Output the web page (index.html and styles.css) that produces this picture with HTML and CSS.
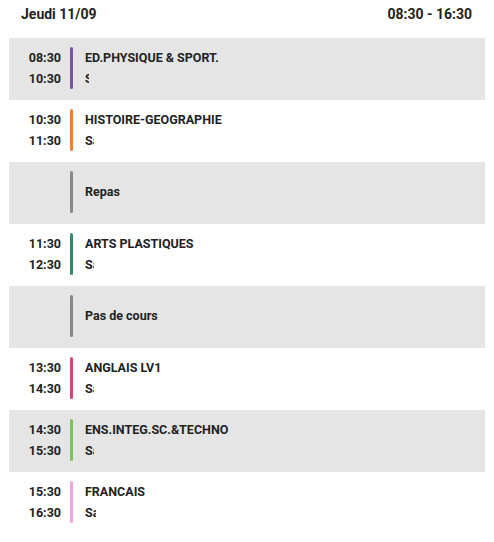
FILE: index.html
```html
<!DOCTYPE html>
<html lang="fr">
<head>
<meta charset="utf-8">
<link rel="stylesheet" href="styles.css">
</head>
<body>
<div class="day">
  <div class="day-head">
    <span>Jeudi 11/09</span>
    <span>08:30 - 16:30</span>
  </div>
  <div class="row alt">
    <div class="times"><span>08:30</span><span>10:30</span></div>
    <div class="bar c-purple"></div>
    <div class="info"><span class="subj">ED.PHYSIQUE &amp; SPORT.</span><span class="room w4">Salle</span></div>
  </div>
  <div class="row">
    <div class="times"><span>10:30</span><span>11:30</span></div>
    <div class="bar c-orange"></div>
    <div class="info"><span class="subj">HISTOIRE-GEOGRAPHIE</span><span class="room w9">Salle</span></div>
  </div>
  <div class="row alt">
    <div class="times"></div>
    <div class="bar c-gray"></div>
    <div class="info single"><span class="subj">Repas</span></div>
  </div>
  <div class="row">
    <div class="times"><span>11:30</span><span>12:30</span></div>
    <div class="bar c-teal"></div>
    <div class="info"><span class="subj">ARTS PLASTIQUES</span><span class="room w9">Salle</span></div>
  </div>
  <div class="row alt">
    <div class="times"></div>
    <div class="bar c-gray"></div>
    <div class="info single"><span class="subj">Pas de cours</span></div>
  </div>
  <div class="row">
    <div class="times"><span>13:30</span><span>14:30</span></div>
    <div class="bar c-crimson"></div>
    <div class="info"><span class="subj">ANGLAIS LV1</span><span class="room w9">Salle</span></div>
  </div>
  <div class="row alt">
    <div class="times"><span>14:30</span><span>15:30</span></div>
    <div class="bar c-green"></div>
    <div class="info"><span class="subj">ENS.INTEG.SC.&amp;TECHNO</span><span class="room w9">Salle</span></div>
  </div>
  <div class="row">
    <div class="times"><span>15:30</span><span>16:30</span></div>
    <div class="bar c-pink"></div>
    <div class="info"><span class="subj">FRANCAIS</span><span class="room w11">Salle</span></div>
  </div>
</div>
</body>
</html>
```
FILE: styles.css
```css
html, body {
  margin: 0;
  padding: 0;
  background: #ffffff;
}
body {
  font-family: Roboto, "Liberation Sans", sans-serif;
  color: #222222;
  font-weight: 700;
}
.day {
  padding: 0 9px;
}
.day-head {
  height: 38px;
  display: flex;
  justify-content: space-between;
  align-items: flex-start;
  padding: 5px 13px 0 12px;
  box-sizing: border-box;
  font-size: 14px;
  line-height: 18px;
}
.row {
  height: 62px;
  display: flex;
  align-items: flex-start;
  padding-top: 9px;
  box-sizing: border-box;
  font-size: 12.5px;
}
.row.alt {
  background: #e5e5e5;
}
.times {
  width: 52px;
  display: flex;
  flex-direction: column;
  align-items: flex-end;
  line-height: 21px;
}
.bar {
  width: 3px;
  height: 42px;
  border-radius: 2px;
  margin-left: 9px;
}
.c-purple { background: #7b52ab; }
.c-orange { background: #f47c30; }
.c-gray { background: #888888; }
.c-teal { background: #2e8c6a; }
.c-crimson { background: #d6456f; }
.c-green { background: #7cc35a; }
.c-pink { background: #f3a3e3; }
.info {
  margin-left: 12px;
  display: flex;
  flex-direction: column;
  line-height: 21px;
}
.info.single {
  line-height: 42px;
}
.room {
  overflow: hidden;
  white-space: nowrap;
}
.w4 { width: 4px; }
.w9 { width: 9px; }
.w11 { width: 11px; }
```
